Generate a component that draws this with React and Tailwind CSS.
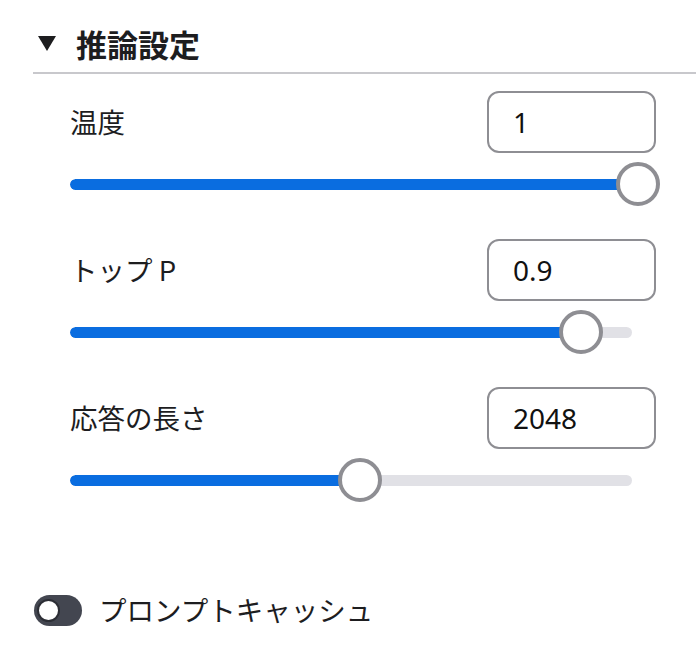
import React from "react";

const rows = [
  { label: "温度", value: "1", frac: 1.0 },
  { label: "トップ P", value: "0.9", frac: 0.895 },
  { label: "応答の長さ", value: "2048", frac: 0.49 },
];

function Slider({ frac }) {
  // thumb center travels from 22px to 568px inside a 590px wide area
  const center = 22 + frac * 546;
  return (
    <div className="relative mt-[9px] h-[44px] w-[590px] flex items-center">
      <div className="relative h-[11px] w-[562px] rounded-full bg-[#e1e1e6] overflow-hidden">
        <div
          className="absolute left-0 top-0 h-full rounded-full bg-[#0a6de0]"
          style={{ width: `${Math.min(center, 562)}px` }}
        />
      </div>
      <div
        className="absolute top-0 h-[44px] w-[44px] rounded-full border-[4px] border-[#8e8e93] bg-white box-border"
        style={{ left: `${center - 22}px` }}
      />
    </div>
  );
}

export default function App() {
  return (
    <div
      className="w-[696px] h-[650px] bg-white pt-[24px] pl-[33px] text-[#1d1d1f] overflow-hidden"
      style={{ fontFamily: '"Noto Sans CJK JP", "Noto Sans", sans-serif' }}
    >
      <div className="h-[38px] flex items-center">
        <svg width="18" height="15" viewBox="0 0 18 15" className="ml-[5px]">
          <polygon points="0,0 18,0 9,15" fill="#1d1d1f" />
        </svg>
        <span className="ml-[20px] text-[31px] font-bold leading-none">推論設定</span>
      </div>
      <div className="mt-[10px] h-[2px] bg-[#c8c8cc]" />
      <div className="pl-[37px] pt-[17px]">
        {rows.map((r) => (
          <div key={r.label} className="mb-[33px]">
            <div className="flex items-center justify-between h-[62px] w-[586px]">
              <span className="text-[27.5px] leading-none">{r.label}</span>
              <div
                className="h-[62px] w-[169px] rounded-[12px] border-2 border-[#8e8e93] flex items-center pl-[24px] text-[28px] text-[#111]"
                style={{ fontFamily: '"Noto Sans", sans-serif' }}
              >
                {r.value}
              </div>
            </div>
            <Slider frac={r.frac} />
          </div>
        ))}
      </div>
      <div className="mt-[88px] flex items-center h-[40px]">
        <div className="ml-[1px] h-[31px] w-[48px] rounded-full bg-[#434650] flex items-center pl-[3px]">
          <div className="h-[23px] w-[23px] rounded-full bg-white border-[2px] border-[#2c2e35]" />
        </div>
        <span className="ml-[17px] text-[27.5px] leading-none">プロンプトキャッシュ</span>
      </div>
    </div>
  );
}
